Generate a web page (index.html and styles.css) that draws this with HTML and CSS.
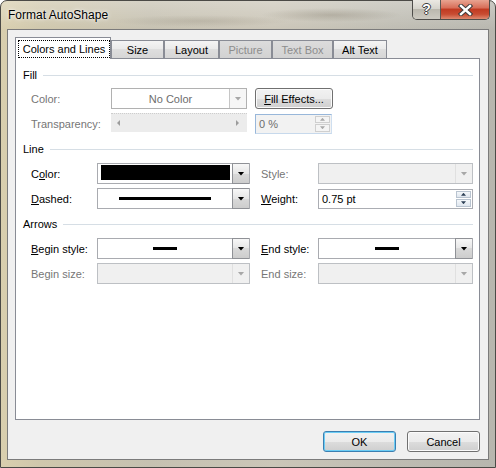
FILE: index.html
```html
<!DOCTYPE html>
<html lang="en">
<head>
    <meta charset="UTF-8">
    <title>Format AutoShape</title>
    <link rel="stylesheet" href="styles.css">
</head>
<body>
    <div class="frame">
        <div class="titlebar">
            <div class="title">Format AutoShape</div>
            <div class="caption-btns">
                <div class="cap-help">?</div>
                <div class="cap-close">
                    <svg width="15" height="12" viewBox="0 0 15 12">
                        <path d="M3 2l9 8M12 2l-9 8" stroke="#3b3b3b" stroke-width="4.4" stroke-linecap="square"/>
                        <path d="M3 2l9 8M12 2l-9 8" stroke="#fff" stroke-width="2.4" stroke-linecap="square"/>
                    </svg>
                </div>
            </div>
        </div>

        <div class="client">
            <div class="tabs">
                <div class="tab active"><span class="focus">Colors and Lines</span></div>
                <div class="tab t-size">Size</div>
                <div class="tab t-layout">Layout</div>
                <div class="tab t-picture off">Picture</div>
                <div class="tab t-textbox off">Text Box</div>
                <div class="tab t-alt">Alt Text</div>
            </div>

            <div class="panel">
                <div class="group-head first">Fill</div>
                <div class="row">
                    <span class="label fill-label off">Color:</span>
                    <div class="combo fill-combo">
                        <div class="value grey">No Color</div>
                        <div class="drop"><span class="arrow"></span></div>
                    </div>
                    <button class="btn fill-btn"><u>F</u>ill Effects...</button>
                </div>
                <div class="row">
                    <span class="label fill-label off">Transparency:</span>
                    <div class="slider">
                        <span class="tri-left"></span>
                        <span class="tri-right"></span>
                    </div>
                    <div class="spin pct">
                        <div class="spin-text">0 %</div>
                        <div class="spin-btns">
                            <div class="spin-up"><span class="up"></span></div>
                            <div class="spin-down"><span class="down"></span></div>
                        </div>
                    </div>
                </div>

                <div class="group-head">Line</div>
                <div class="row">
                    <span class="label line-label">C<u>o</u>lor:</span>
                    <div class="combo left-combo">
                        <div class="swatch"></div>
                        <div class="drop"><span class="arrow"></span></div>
                    </div>
                    <span class="label right-label off">Style:</span>
                    <div class="combo right-combo off">
                        <div class="value"></div>
                        <div class="drop"><span class="arrow"></span></div>
                    </div>
                </div>
                <div class="row">
                    <span class="label line-label"><u>D</u>ashed:</span>
                    <div class="combo left-combo">
                        <div class="value"><span class="stroke long"></span></div>
                        <div class="drop"><span class="arrow"></span></div>
                    </div>
                    <span class="label right-label"><u>W</u>eight:</span>
                    <div class="spin weight">
                        <div class="spin-text">0.75 pt</div>
                        <div class="spin-btns">
                            <div class="spin-up"><span class="up"></span></div>
                            <div class="spin-down"><span class="down"></span></div>
                        </div>
                    </div>
                </div>

                <div class="group-head">Arrows</div>
                <div class="row">
                    <span class="label line-label"><u>B</u>egin style:</span>
                    <div class="combo left-combo">
                        <div class="value"><span class="stroke short"></span></div>
                        <div class="drop"><span class="arrow"></span></div>
                    </div>
                    <span class="label right-label"><u>E</u>nd style:</span>
                    <div class="combo right-combo">
                        <div class="value"><span class="stroke short"></span></div>
                        <div class="drop"><span class="arrow"></span></div>
                    </div>
                </div>
                <div class="row">
                    <span class="label line-label off">Begin size:</span>
                    <div class="combo left-combo off">
                        <div class="value"></div>
                        <div class="drop"><span class="arrow"></span></div>
                    </div>
                    <span class="label right-label off">End size:</span>
                    <div class="combo right-combo off">
                        <div class="value"></div>
                        <div class="drop"><span class="arrow"></span></div>
                    </div>
                </div>
            </div>

            <div class="dlg-buttons">
                <button class="btn dlg default">OK</button>
                <button class="btn dlg">Cancel</button>
            </div>
        </div>
    </div>
</body>
</html>
```

FILE: styles.css
```css
* {
    margin: 0;
    padding: 0;
    box-sizing: border-box;
}

body {
    width: 496px;
    height: 468px;
    overflow: hidden;
    font-family: "Liberation Sans", Arial, sans-serif;
    font-size: 11px;
    color: #000;
}

/* Aero window frame */
.frame {
    width: 496px;
    height: 468px;
    border: 1px solid #4b4a46;
    border-radius: 7px 7px 0 0;
    padding: 0 6px 7px 6px;
    display: flex;
    flex-direction: column;
    background:
        radial-gradient(ellipse 70px 7px at 330px 14px, rgba(90,80,60,0.22), transparent),
        radial-gradient(ellipse 90px 6px at 200px 20px, rgba(90,80,60,0.15), transparent),
        linear-gradient(180deg, rgba(255,255,255,0.28), rgba(255,255,255,0) 30px),
        linear-gradient(90deg, #d9cfae 0, #cfc7ac 8%, #c6c1b1 30%, #cbc6b8 55%, #bebcb2 80%, #b7b6ae 100%);
}

.titlebar {
    height: 28px;
    display: flex;
    align-items: flex-start;
}

.title {
    flex: 1;
    font-size: 12px;
    padding: 7px 0 0 1px;
    text-shadow: 0 0 5px rgba(255,255,255,0.9), 0 0 2px rgba(255,255,255,0.9);
}

.caption-btns {
    display: flex;
    height: 20px;
    margin: -1px -1px 0 0;
    border: 1px solid #4e4d4a;
    border-top: none;
    border-radius: 0 0 5px 5px;
    overflow: hidden;
}

.cap-help {
    width: 28px;
    border-right: 1px solid #5a5954;
    background: linear-gradient(#ebe9e3, #d6d4cc 45%, #bbb8ae 50%, #cdcac1);
    color: #fff;
    font-weight: bold;
    font-size: 14px;
    line-height: 19px;
    text-align: center;
    text-shadow: 1px 0 #3d3d3d, -1px 0 #3d3d3d, 0 1px #3d3d3d, 0 -1px #3d3d3d;
}

.cap-close {
    width: 48px;
    display: flex;
    align-items: center;
    justify-content: center;
    background: linear-gradient(#e8a491, #d8705a 40%, #c13b22 50%, #c84c32 75%, #df8a70);
}

/* client area */
.client {
    flex: 1;
    background: #f0f0f0;
    border: 1px solid #7b7b7b;
    padding: 7px 8px 0 7px;
}

.tabs {
    display: flex;
    align-items: flex-end;
    height: 22px;
    position: relative;
    z-index: 1;
}

.tab {
    height: 18px;
    margin-bottom: 1px;
    border: 1px solid #898c95;
    border-bottom: none;
    background: linear-gradient(#f4f4f4, #e9e9e9 50%, #dedede 50%, #d6d6d6);
    display: flex;
    align-items: center;
    justify-content: center;
}

.tab.active {
    width: 96px;
    height: 22px;
    margin-bottom: 0;
    background: #fff;
    padding: 2px 0 1px 2px;
    align-items: stretch;
}

.focus {
    flex: 1;
    border: 1px dotted #000;
    display: flex;
    align-items: center;
    justify-content: center;
}

.tab.off {
    background: linear-gradient(#dcdcdc, #d2d2d2);
    color: #8d8d8d;
}

.t-size { width: 53px; }
.t-layout { width: 55px; }
.t-picture { width: 53px; }
.t-textbox { width: 61px; }
.t-alt { width: 54px; }

.panel {
    height: 362px;
    margin-top: -1px;
    background: #fff;
    border: 1px solid #898c95;
    padding: 1px 6px 0 7px;
}

.group-head {
    display: flex;
    align-items: center;
    height: 14px;
    margin: 8px 0 7px 0;
}

.group-head.first {
    margin-bottom: 6px;
}

.group-head::after {
    content: "";
    flex: 1;
    height: 1px;
    background: #d6dee5;
    margin-left: 6px;
}

.row {
    display: flex;
    align-items: center;
    height: 21px;
    padding-left: 8px;
}

.row + .row {
    margin-top: 4px;
}

.label.off {
    color: #767676;
}

.fill-label { width: 80px; }
.line-label { width: 66px; }
.right-label { width: 57px; margin-left: 11px; }

/* combo boxes */
.combo {
    display: flex;
    height: 21px;
    border: 1px solid #a9abb0;
    background: #fff;
}

.fill-combo { width: 136px; border-color: #b1b1b1; }
.left-combo { width: 153px; }
.right-combo { width: 155px; }

.value {
    flex: 1;
    display: flex;
    align-items: center;
    justify-content: center;
}

.value.grey {
    color: #6d6d6d;
}

.drop {
    width: 17px;
    border: 1px solid #8f9196;
    border-right: none;
    margin: -1px 0;
    background: linear-gradient(#f7f7f7, #e6e6e6 50%, #d9d9d9 50%, #cdcdcd);
    display: flex;
    align-items: center;
    justify-content: center;
}

.arrow {
    width: 7px;
    height: 4px;
    background: #000;
    clip-path: polygon(0 0, 100% 0, 50% 100%);
}

.fill-combo .drop {
    border-color: #c6c6c6;
    background: #f6f6f6;
    margin: 0;
    border-top: none;
    border-bottom: none;
}

.fill-combo .arrow,
.combo.off .arrow {
    background: #a7a7a7;
}

.combo.off {
    background: #f0f0f0;
    border-color: #bdc0c4;
}

.combo.off .drop {
    background: none;
    border: none;
    border-left: 1px solid #e0e0e0;
    margin: 0;
}

.swatch {
    flex: 1;
    margin: 1px 2px 3px 3px;
    background: #000;
}

.stroke {
    height: 3px;
    background: #000;
}

.stroke.long { width: 92px; }
.stroke.short { width: 24px; }

/* buttons */
.btn {
    height: 21px;
    border: 1px solid #707070;
    border-radius: 3px;
    background: linear-gradient(#f2f2f2, #ebebeb 50%, #dddddd 50%, #cfcfcf);
    box-shadow: inset 0 0 0 1px #fbfbfb;
    font-family: "Liberation Sans", Arial, sans-serif;
    font-size: 11px;
    color: #000;
}

.fill-btn {
    width: 78px;
    margin-left: 8px;
}

/* transparency slider */
.slider {
    width: 136px;
    height: 19px;
    margin-top: -2px;
    background: #ececec;
    border-top: 1px dotted #cdcdcd;
    display: flex;
    align-items: center;
    justify-content: space-between;
    padding: 0 8px 0 6px;
}

.tri-left,
.tri-right {
    width: 3px;
    height: 6px;
    background: #9c9c9c;
}

.tri-left { clip-path: polygon(100% 0, 100% 100%, 0 50%); }
.tri-right { clip-path: polygon(0 0, 100% 50%, 0 100%); }

/* spin boxes */
.spin {
    display: flex;
    height: 20px;
    border: 1px solid #abadb3;
    background: #fff;
}

.spin.pct {
    width: 77px;
    margin-left: 8px;
    background: #f2f2f2;
    border-color: #98b7da #cfdff0 #c7d9ec #98b7da;
    color: #6d6d6d;
}

.spin.weight {
    width: 155px;
}

.spin-text {
    flex: 1;
    display: flex;
    align-items: center;
    padding-left: 3px;
}

.spin-btns {
    width: 16px;
    display: flex;
    flex-direction: column;
    padding: 1px 1px 1px 0;
    gap: 1px;
}

.spin-up,
.spin-down {
    flex: 1;
    border: 1px solid #b9c4d0;
    background: linear-gradient(#f5f8fb, #dfe6ee);
    display: flex;
    align-items: center;
    justify-content: center;
}

.pct .spin-up,
.pct .spin-down {
    border-color: #cfcfcf;
    background: #f4f4f4;
}

.up,
.down {
    width: 5px;
    height: 3px;
    background: #2c3f55;
}

.up { clip-path: polygon(50% 0, 100% 100%, 0 100%); }
.down { clip-path: polygon(0 0, 100% 0, 50% 100%); }

.pct .up,
.pct .down {
    background: #a8a8a8;
}

.dlg-buttons {
    display: flex;
    justify-content: flex-end;
    gap: 11px;
    margin-top: 11px;
}

.dlg {
    width: 73px;
}

.dlg.default {
    border-color: #3c7fb1;
    box-shadow: inset 0 0 0 1px #6ccdf5;
}
```
